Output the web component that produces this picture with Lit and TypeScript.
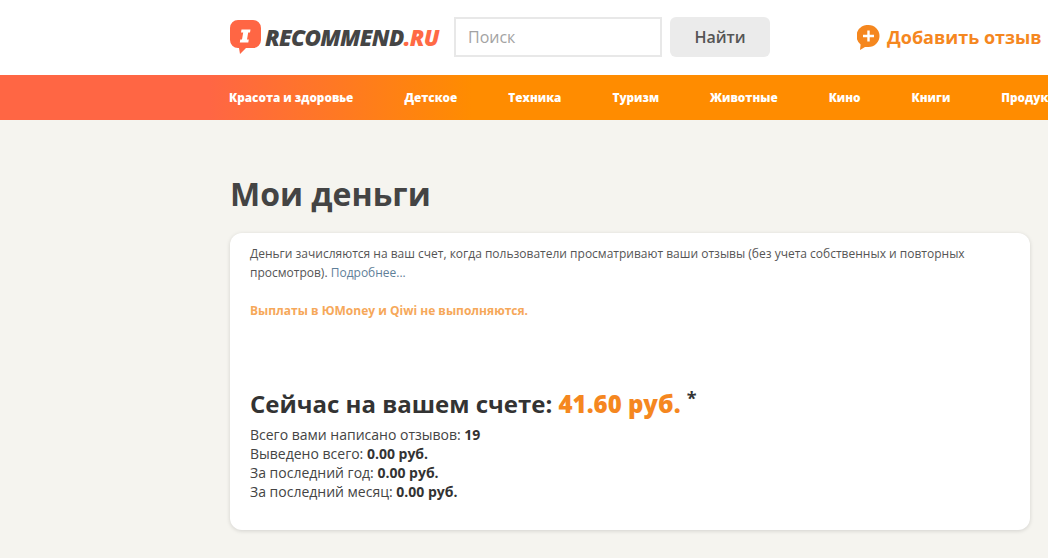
import { LitElement, html, css } from 'lit';
import { customElement } from 'lit/decorators.js';

const NAV = ['Красота и здоровье', 'Детское', 'Техника', 'Туризм', 'Животные', 'Кино', 'Книги', 'Продукты'];

@customElement('app-root')
export class AppRoot extends LitElement {
  static override styles = css`
    :host {
      display: block;
      width: 1048px;
      height: 558px;
      overflow: hidden;
      background: #f5f4ef;
      font-family: 'Open Sans', 'Noto Sans', sans-serif;
      color: #444;
    }
    .top {
      box-sizing: border-box;
      height: 75px;
      background: #fff;
      display: flex;
      align-items: center;
      padding: 0 0 1px 230px;
      white-space: nowrap;
    }
    .top > * { flex-shrink: 0; }
    .logo {
      display: flex;
      align-items: center;
      width: 224px;
    }
    .logo svg { display: block; margin-right: 4px; }
    .logo-text {
      font-size: 22.5px;
      font-weight: 800;
      font-style: italic;
      letter-spacing: -0.68px;
      color: #454545;
    }
    .logo-text span { color: #ff6a45; }
    .search {
      box-sizing: border-box;
      width: 208px;
      height: 40px;
      border: 2px solid #e8e8e8;
      padding-left: 12px;
      font-size: 16px;
      line-height: 36px;
      color: #a3a3a3;
      margin-right: 8px;
    }
    .find {
      box-sizing: border-box;
      width: 100px;
      height: 40px;
      border-radius: 6px;
      background: #ebebeb;
      text-align: center;
      font-size: 16px;
      font-weight: 600;
      line-height: 40px;
      color: #555;
      margin-right: 87px;
    }
    .add {
      display: flex;
      align-items: center;
      gap: 7px;
      font-size: 18px;
      font-weight: 700;
      color: #f5871f;
    }
    .nav {
      box-sizing: border-box;
      height: 45px;
      background: linear-gradient(90deg, #ff6644 0%, #ff6644 20%, #ff8c00 45%, #ff8c00 100%);
      display: flex;
      align-items: center;
      gap: 51px;
      padding: 0 0 1px 229px;
      white-space: nowrap;
      font-size: 11.75px;
      font-weight: 800;
      color: #fff;
    }
    .nav > div { flex-shrink: 0; }
    .main { padding: 50px 18px 0 230px; }
    h1 {
      margin: 0 0 16px;
      font-size: 32px;
      line-height: 47px;
      font-weight: 700;
      color: #444;
    }
    .card {
      box-sizing: border-box;
      height: 297px;
      background: #fff;
      border-radius: 12px;
      box-shadow: 0 1px 4px rgba(0, 0, 0, 0.14);
      padding: 12px 20px;
    }
    .info {
      font-size: 12px;
      line-height: 18.5px;
      color: #555;
    }
    .info a { color: #5f7f99; }
    .warn {
      margin: 20px 0 0;
      font-size: 12px;
      line-height: 18px;
      font-weight: 700;
      color: #f6a85a;
    }
    h2 {
      margin: 66px 0 0;
      font-size: 24px;
      line-height: 36px;
      font-weight: 700;
      color: #333;
    }
    h2 span { color: #f5871f; font-weight: 800; }
    h2 sup {
      font-size: 18px;
      font-weight: 700;
      line-height: 0;
      vertical-align: 8px;
    }
    .stats {
      margin-top: 3px;
      font-size: 14px;
      line-height: 19px;
      color: #444;
    }
    .stats b { color: #333; }
  `;

  override render() {
    return html`
      <div class="top">
        <div class="logo">
          <svg width="31" height="34" viewBox="0 0 31 34">
            <path fill="#ff6644" d="M8 0h15a8 8 0 0 1 8 8v12a8 8 0 0 1-8 8H16l-6 6-1-6H8a8 8 0 0 1-8-8V8a8 8 0 0 1 8-8z"/>
            <path fill="#fff" d="M11.500 9.500h9l-.5 3h-1.800l-1.200 7h1.800l-.5 3h-8.500l.5-3h1.700l1.200-7H11z"/>
          </svg>
          <div class="logo-text">RECOMMEND<span>.RU</span></div>
        </div>
        <div class="search">Поиск</div>
        <div class="find">Найти</div>
        <div class="add">
          <svg width="23" height="25" viewBox="0 0 23 25">
            <path fill="#f5871f" d="M11.500 0a11 11 0 0 1 0 22H8l-5 3 .6-5.500A11 11 0 0 1 11.500 0z"/>
            <path fill="#fff" d="M10.300 5.500h2.400v4.300h4.300v2.400h-4.300v4.300h-2.400v-4.300H6v-2.400h4.300z"/>
          </svg>
          Добавить отзыв
        </div>
      </div>
      <div class="nav">${NAV.map((n) => html`<div>${n}</div>`)}</div>
      <div class="main">
        <h1>Мои деньги</h1>
        <div class="card">
          <div class="info">
            <div>Деньги зачисляются на ваш счет, когда пользователи просматривают ваши отзывы (без учета собственных и повторных</div>
            <div>просмотров). <a>Подробнее...</a></div>
          </div>
          <p class="warn">Выплаты в ЮMoney и Qiwi не выполняются.</p>
          <h2>Сейчас на вашем счете: <span>41.60 руб.</span> <sup>*</sup></h2>
          <div class="stats">
            <div>Всего вами написано отзывов: <b>19</b></div>
            <div>Выведено всего: <b>0.00 руб.</b></div>
            <div>За последний год: <b>0.00 руб.</b></div>
            <div>За последний месяц: <b>0.00 руб.</b></div>
          </div>
        </div>
      </div>
    `;
  }
}
